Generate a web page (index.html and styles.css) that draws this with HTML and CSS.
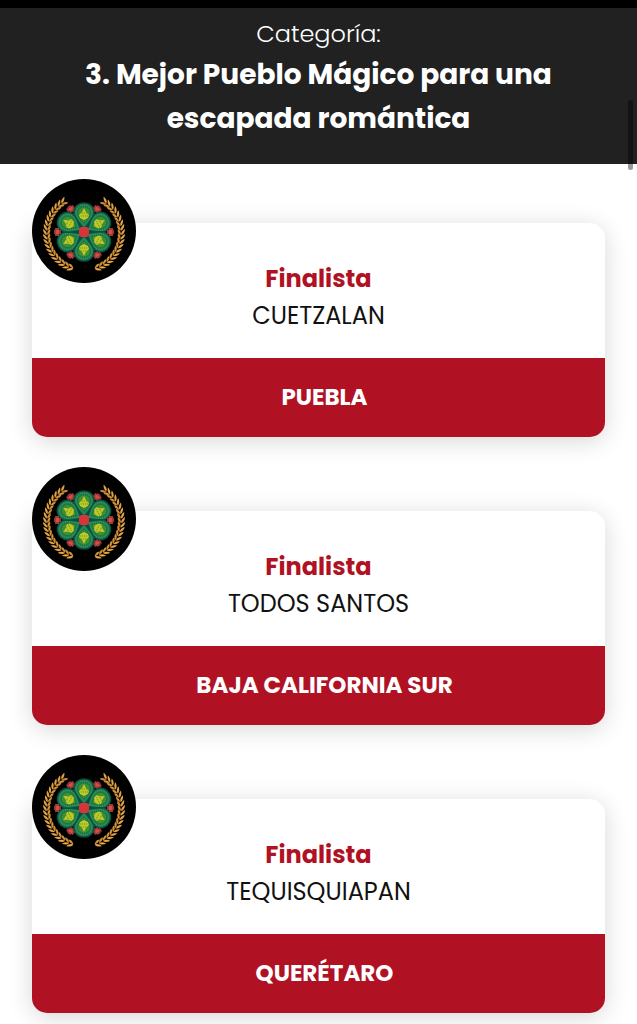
FILE: index.html
```html
<!DOCTYPE html>
<html lang="es">
<head>
    <meta charset="UTF-8">
    <meta name="viewport" content="width=device-width, initial-scale=1.0">
    <title>Mejor Pueblo Mágico para una escapada romántica</title>
    <link rel="stylesheet" href="styles.css">
</head>
<body>

    <!-- Badge drawing, shared by all the cards -->
    <svg class="sprite" aria-hidden="true">
        <defs>
            <g id="petal">
                <path d="M0 -3 C-3 -8 -10 -13 -10 -19 C-10 -26 -5 -29 0 -29 C5 -29 10 -26 10 -19 C10 -13 3 -8 0 -3Z" fill="#1f7d4e" stroke="#0b4f43" stroke-width="1.5"/>
                <path d="M0 -6 C-3 -11 -8 -14 -8 -19 C-8 -24 -4 -27 0 -27 C4 -27 8 -24 8 -19 C8 -14 3 -11 0 -6Z" fill="none" stroke="#3aa35f" stroke-width="1" stroke-dasharray="1 1"/>
                <path d="M0 -9 C-3 -13 -6 -15 -6 -19 C-6 -23 -3 -25 0 -25 C3 -25 6 -23 6 -19 C6 -15 3 -13 0 -9Z" fill="#3f8f34" stroke="#176b3c" stroke-width="1" stroke-dasharray="1 1"/>
                <path d="M0 -24 L2 -20 L5 -17 L4 -14 L0 -12 L-4 -14 L-5 -17 L-2 -20Z" fill="#bfc826"/>
                <path d="M-3 -16 H4 M-2 -19 H3" fill="none" stroke="#5f9428" stroke-width="1" stroke-dasharray="1 1"/>
            </g>
            <g id="bud">
                <path d="M-2 -30 H2 V-29 H4 V-25 H2 V-23 H-2 V-25 H-4 V-29 H-2Z" fill="#a33836"/>
                <rect x="-2" y="-28" width="4" height="3" fill="#cf5048"/>
            </g>
            <g id="leaf">
                <path d="M-2 -37 C-2 -39 1 -41 4 -41 C3 -39 1 -37 -2 -37Z" fill="#e3a243"/>
                <path d="M-2 -37 C-1 -35 1 -33 4 -34 C3 -36 1 -37 -2 -37Z" fill="#d18f38"/>
            </g>
            <g id="sprig">
                <use href="#leaf"/>
                <use href="#leaf" transform="rotate(7)"/>
                <use href="#leaf" transform="rotate(14)"/>
                <use href="#leaf" transform="rotate(21)"/>
                <use href="#leaf" transform="rotate(28)"/>
                <use href="#leaf" transform="rotate(35)"/>
            </g>
            <g id="branch">
                <use href="#sprig" transform="rotate(200)"/>
                <use href="#sprig" transform="rotate(242)"/>
                <use href="#sprig" transform="rotate(284)"/>
                <use href="#leaf" transform="rotate(326)"/>
            </g>
            <symbol id="badge" viewBox="0 0 104 104">
                <circle cx="52" cy="52" r="52" fill="#000"/>
                <g transform="translate(52 54)">
                    <use href="#branch"/>
                    <use href="#branch" transform="scale(-1 1)"/>
                </g>
                <g transform="translate(52 53)">
                    <circle r="18" fill="#0a4a40"/>
                    <use href="#petal"/>
                    <use href="#petal" transform="rotate(60)"/>
                    <use href="#petal" transform="rotate(120)"/>
                    <use href="#petal" transform="rotate(180)"/>
                    <use href="#petal" transform="rotate(240)"/>
                    <use href="#petal" transform="rotate(300)"/>
                    <use href="#bud" transform="rotate(30)"/>
                    <use href="#bud" transform="rotate(90)"/>
                    <use href="#bud" transform="rotate(150)"/>
                    <use href="#bud" transform="rotate(210)"/>
                    <use href="#bud" transform="rotate(270)"/>
                    <use href="#bud" transform="rotate(330)"/>
                    <path d="M-3 -5 H3 L5 -3 V3 L3 5 H-3 L-5 3 V-3Z" fill="#d9343a"/>
                </g>
            </symbol>
        </defs>
    </svg>

    <header class="category">
        <p class="category-label">Categoría:</p>
        <h1 class="category-title">3. Mejor Pueblo Mágico para una escapada romántica</h1>
    </header>

    <main class="finalists">
        <article class="card">
            <svg class="badge" aria-hidden="true"><use href="#badge"/></svg>
            <div class="card-body">
                <h2 class="status">Finalista</h2>
                <p class="town">CUETZALAN</p>
            </div>
            <p class="region">PUEBLA</p>
        </article>

        <article class="card">
            <svg class="badge" aria-hidden="true"><use href="#badge"/></svg>
            <div class="card-body">
                <h2 class="status">Finalista</h2>
                <p class="town">TODOS SANTOS</p>
            </div>
            <p class="region">BAJA CALIFORNIA SUR</p>
        </article>

        <article class="card">
            <svg class="badge" aria-hidden="true"><use href="#badge"/></svg>
            <div class="card-body">
                <h2 class="status">Finalista</h2>
                <p class="town">TEQUISQUIAPAN</p>
            </div>
            <p class="region">QUERÉTARO</p>
        </article>
    </main>

    <div class="scroll-thumb"></div>

</body>
</html>
```

FILE: styles.css
```css
* {
    box-sizing: border-box;
}
html {
    scrollbar-width: none;
}
body {
    margin: 0;
    font-family: Poppins, Inter, "Open Sans", sans-serif;
    font-size: 24px;
    line-height: 37px;
    color: #111;
    background-color: white;
    text-align: center;
}
h1, h2, p {
    margin: 0;
}
.sprite {
    position: absolute;
    width: 0;
    height: 0;
}
.category {
    padding: 7px 64px 23px;
    border-top: 8px solid black;
    background-color: #212121;
    color: white;
}
.category-label {
    font-weight: 300;
}
.category-title {
    font-size: 28px;
    font-weight: 700;
    line-height: 44px;
    padding-top: 1px;
}
.finalists {
    display: flex;
    flex-direction: column;
    gap: 74px;
    padding: 59px 32px 48px;
}
.card {
    position: relative;
    border-radius: 15px;
    background-color: white;
    box-shadow: 0 4px 24px rgba(0, 0, 0, 0.16);
}
.badge {
    position: absolute;
    top: -44px;
    left: 0;
    width: 104px;
    height: 104px;
}
.card-body {
    padding: 37px 24px 24px;
}
.status {
    font-size: 24px;
    font-weight: 700;
    color: #b01224;
}
.region {
    padding: 21px 12px 21px 24px;
    border-radius: 0 0 15px 15px;
    background-color: #b01224;
    color: white;
    font-size: 23px;
    font-weight: 700;
}
.scroll-thumb {
    position: absolute;
    top: 100px;
    right: 4px;
    width: 5px;
    height: 70px;
    border-radius: 3px;
    background-color: rgba(0, 0, 0, 0.4);
}
```
